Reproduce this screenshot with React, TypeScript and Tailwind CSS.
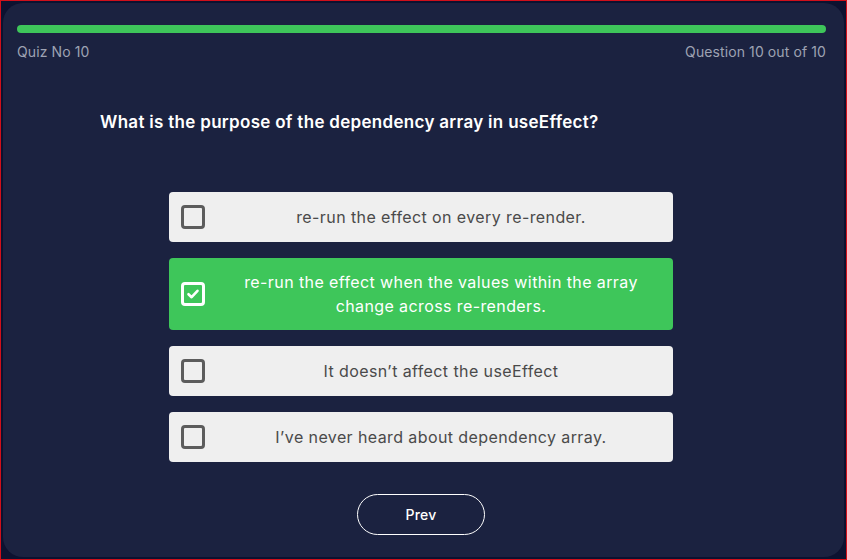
import React from "react";

const options = [
  { text: "re-run the effect on every re-render.", checked: false },
  { text: "re-run the effect when the values within the array change across re-renders.", checked: true },
  { text: "It doesn\u2019t affect the useEffect", checked: false },
  { text: "I\u2019ve never heard about dependency array.", checked: false },
];

function Box({ checked }: { checked: boolean }) {
  if (checked) {
    return (
      <div className="w-[24px] h-[24px] shrink-0 rounded-[4px] border-[3px] border-white flex items-center justify-center">
        <svg width="14" height="14" viewBox="0 0 14 14" fill="none">
          <path d="M2.5 7.2 L5.6 10.2 L11.5 3.8" stroke="white" strokeWidth="2.6" strokeLinecap="round" strokeLinejoin="round" />
        </svg>
      </div>
    );
  }
  return <div className="w-[24px] h-[24px] shrink-0 rounded-[4px] border-[3px] border-[#5c5c5c]" />;
}

export default function App() {
  return (
    <div className="w-[847px] h-[560px] border border-[#d0101a] bg-[#0d1230] p-[2px]" style={{ fontFamily: "Inter, 'Noto Sans', sans-serif" }}>
      <div className="h-full rounded-[20px] bg-[#1b2240] pl-[14px] pr-[18px] pt-[22px] flex flex-col">
        <div className="h-[8px] rounded-full bg-[#3ec65a]" />
        <div className="mt-[9px] flex justify-between text-[14px] leading-[20px] text-[#9ea2b3] tracking-[0.1px]">
          <span>Quiz No 10</span>
          <span>Question 10 out of 10</span>
        </div>
        <div className="mt-[47px] ml-[83px] text-[17px] leading-[26px] font-semibold text-white tracking-[0.3px]">
          What is the purpose of the dependency array in useEffect?
        </div>
        <div className="mt-[57px] ml-[152px] w-[504px] flex flex-col gap-[16px]">
          {options.map((o, i) => (
            <div
              key={i}
              className={
                "flex items-center min-h-[50px] rounded-[4px] pl-[12px] pr-[4px] py-[12px] " +
                (o.checked ? "bg-[#3ec65a] text-white" : "bg-[#efefef] text-[#4a4a4a]")
              }
            >
              <Box checked={o.checked} />
              <div className="flex-1 ml-[8px] text-center text-[16px] leading-[24px] px-[14px] tracking-[0.4px]">{o.text}</div>
            </div>
          ))}
        </div>
        <div className="mt-[32px] ml-[340px]">
          <button className="w-[128px] h-[41px] rounded-full border border-white text-white text-[14px] font-medium tracking-[0.2px]">
            Prev
          </button>
        </div>
      </div>
    </div>
  );
}
